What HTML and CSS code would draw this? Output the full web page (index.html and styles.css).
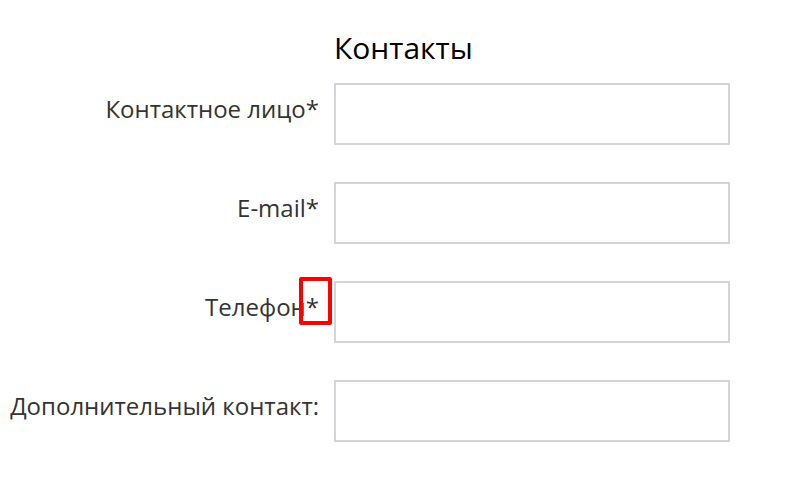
FILE: index.html
```html
<!DOCTYPE html>
<html lang="ru">
<head>
<meta charset="utf-8">
<title>Контакты</title>
<link rel="stylesheet" href="styles.css">
</head>
<body>
<form class="form">
  <h2 class="title">Контакты</h2>
  <div class="row">
    <label class="label" for="f1">Контактное лицо*</label>
    <input class="field" id="f1" type="text">
  </div>
  <div class="row">
    <label class="label" for="f2">E-mail*</label>
    <input class="field" id="f2" type="text">
  </div>
  <div class="row">
    <label class="label" for="f3">Телефон<span class="mark">*</span></label>
    <input class="field" id="f3" type="text">
  </div>
  <div class="row">
    <label class="label" for="f4">Дополнительный контакт:</label>
    <input class="field" id="f4" type="text">
  </div>
</form>
</body>
</html>
```
FILE: styles.css
```css
html, body {
  margin: 0;
  padding: 0;
  background: #ffffff;
}

body {
  font-family: "Open Sans", "Liberation Sans", sans-serif;
  color: #333333;
}

.form {
  display: flex;
  flex-direction: column;
  gap: 37px;
  padding-top: 28px;
}

.title {
  margin: 0 0 -22px 334px;
  font-size: 30px;
  line-height: 40px;
  font-weight: 400;
  color: #000000;
}

.row {
  display: grid;
  grid-template-columns: 319px 396px;
  column-gap: 15px;
  align-items: start;
}

.label {
  text-align: right;
  font-size: 24px;
  line-height: 32px;
  padding-top: 10px;
  white-space: nowrap;
}

.field {
  box-sizing: border-box;
  width: 396px;
  height: 62px;
  margin: 0;
  border: 2px solid #d2d5da;
  border-radius: 0;
  background: #ffffff;
  outline: none;
}

.mark {
  position: relative;
}

.mark::after {
  content: "";
  position: absolute;
  left: -7px;
  right: -13px;
  top: -13px;
  bottom: -2px;
  border: 4px solid #ff0000;
  border-radius: 2px;
}
```
